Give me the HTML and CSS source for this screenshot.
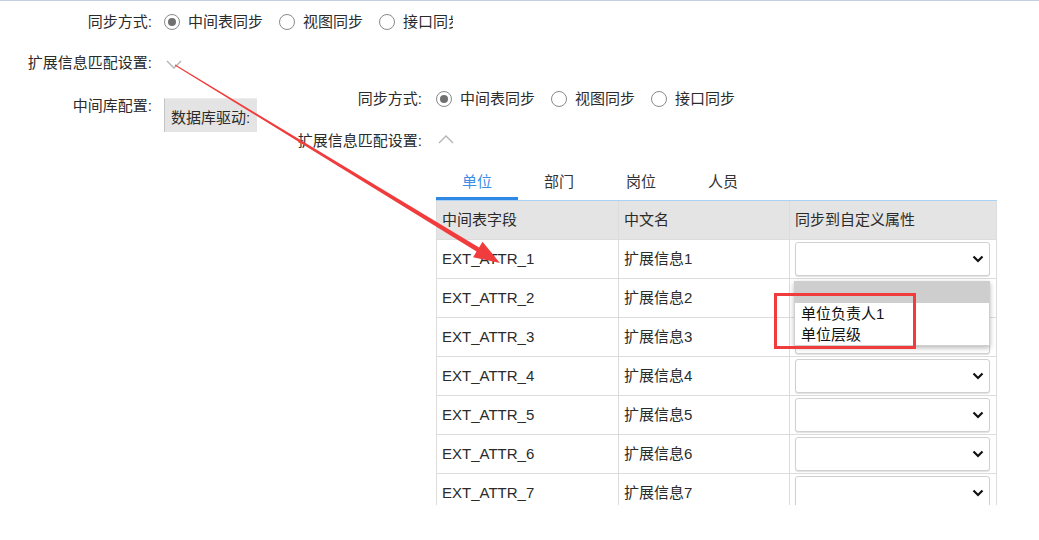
FILE: index.html
```html
<!DOCTYPE html>
<html lang="zh-CN">
<head>
<meta charset="utf-8">
<title>同步设置</title>
<link rel="stylesheet" href="styles.css">
</head>
<body>
<div class="topline"></div>
<div class="form">
  <div class="row r1">
    <div class="label">同步方式:</div>
    <div class="radios clip">
      <label class="radio"><span class="circle on"></span>中间表同步</label>
      <label class="radio"><span class="circle"></span>视图同步</label>
      <label class="radio"><span class="circle"></span>接口同步</label>
    </div>
  </div>
  <div class="row r2">
    <div class="label">扩展信息匹配设置:</div>
    <svg class="chev down" width="16" height="9" viewBox="0 0 16 9"><polyline points="1,1 8,8 15,1" fill="none" stroke="#b4b4b4" stroke-width="1.4"/></svg>
  </div>
  <div class="row r3">
    <div class="label">中间库配置:</div>
    <div class="db">数据库驱动:</div>
    <div class="panel">
      <div class="prow p1">
        <div class="plabel">同步方式:</div>
        <div class="radios">
          <label class="radio"><span class="circle on"></span>中间表同步</label>
          <label class="radio"><span class="circle"></span>视图同步</label>
          <label class="radio"><span class="circle"></span>接口同步</label>
        </div>
      </div>
      <div class="prow p2">
        <div class="plabel">扩展信息匹配设置:</div>
        <svg class="chev up" width="16" height="9" viewBox="0 0 16 9"><polyline points="1,8 8,1 15,8" fill="none" stroke="#b4b4b4" stroke-width="1.4"/></svg>
      </div>
      <div class="tabs">
        <div class="tab active">单位</div>
        <div class="tab">部门</div>
        <div class="tab">岗位</div>
        <div class="tab">人员</div>
      </div>
      <div class="tablewrap">
        <div class="trow head">
          <div class="cell">中间表字段</div>
          <div class="cell">中文名</div>
          <div class="cell last">同步到自定义属性</div>
        </div>
        <div class="trow"><div class="cell">EXT_ATTR_1</div><div class="cell">扩展信息1</div><div class="cell last sel"><div class="select"><svg width="12" height="8" viewBox="0 0 12 8"><polyline points="1.5,1.5 6,6 10.5,1.5" fill="none" stroke="#111" stroke-width="2.2"/></svg></div></div></div>
        <div class="trow"><div class="cell">EXT_ATTR_2</div><div class="cell">扩展信息2</div><div class="cell last sel"><div class="select"><svg width="12" height="8" viewBox="0 0 12 8"><polyline points="1.5,1.5 6,6 10.5,1.5" fill="none" stroke="#111" stroke-width="2.2"/></svg></div></div></div>
        <div class="trow"><div class="cell">EXT_ATTR_3</div><div class="cell">扩展信息3</div><div class="cell last sel"><div class="select"><svg width="12" height="8" viewBox="0 0 12 8"><polyline points="1.5,1.5 6,6 10.5,1.5" fill="none" stroke="#111" stroke-width="2.2"/></svg></div></div></div>
        <div class="trow"><div class="cell">EXT_ATTR_4</div><div class="cell">扩展信息4</div><div class="cell last sel"><div class="select"><svg width="12" height="8" viewBox="0 0 12 8"><polyline points="1.5,1.5 6,6 10.5,1.5" fill="none" stroke="#111" stroke-width="2.2"/></svg></div></div></div>
        <div class="trow"><div class="cell">EXT_ATTR_5</div><div class="cell">扩展信息5</div><div class="cell last sel"><div class="select"><svg width="12" height="8" viewBox="0 0 12 8"><polyline points="1.5,1.5 6,6 10.5,1.5" fill="none" stroke="#111" stroke-width="2.2"/></svg></div></div></div>
        <div class="trow"><div class="cell">EXT_ATTR_6</div><div class="cell">扩展信息6</div><div class="cell last sel"><div class="select"><svg width="12" height="8" viewBox="0 0 12 8"><polyline points="1.5,1.5 6,6 10.5,1.5" fill="none" stroke="#111" stroke-width="2.2"/></svg></div></div></div>
        <div class="trow"><div class="cell">EXT_ATTR_7</div><div class="cell">扩展信息7</div><div class="cell last sel"><div class="select"><svg width="12" height="8" viewBox="0 0 12 8"><polyline points="1.5,1.5 6,6 10.5,1.5" fill="none" stroke="#111" stroke-width="2.2"/></svg></div></div></div>
        <div class="dropdown">
          <div class="dd-blank"></div>
          <div class="dd-item">单位负责人1</div>
          <div class="dd-item">单位层级</div>
        </div>
      </div>
    </div>
  </div>
</div>
<svg class="annot" width="1039" height="540" viewBox="0 0 1039 540">
  <polygon fill="#f03c3c" points="175.26,64.57 479.1,247.4 482.5,241.8 500,263 473.1,257.2 476.5,251.6 174.74,65.43"/>
  <rect x="775.5" y="294.5" width="139" height="53" fill="none" stroke="#f03c3c" stroke-width="3"/>
</svg>
</body>
</html>
```

FILE: styles.css
```css
* { box-sizing: border-box; }
html, body { margin: 0; padding: 0; background: #fff; }
body {
  font-family: "Liberation Sans", "Noto Sans CJK SC", sans-serif;
  font-size: 15px;
  line-height: 20px;
  color: #2b2b2b;
  width: 1039px;
  height: 540px;
  overflow: hidden;
  position: relative;
}
.topline { height: 1px; background: #c3cee0; }

.row { display: flex; }
.label { width: 152px; text-align: right; margin-right: 12px; flex: none; }
.r1 { height: 42px; align-items: center; }
.r2 { height: 37px; padding-top: 10px; }
.r2 .chev { margin-top: 7px; margin-left: 2px; }
.r3 .label { padding-top: 16px; }

.radios { display: flex; align-items: center; white-space: nowrap; }
.clip { width: 289px; overflow: hidden; }
.radio { display: inline-flex; align-items: center; gap: 8px; margin-right: 16px; flex: none; }
.circle {
  width: 16px; height: 16px; border-radius: 50%;
  border: 1px solid #8a8a8a; background: #fff;
  display: inline-flex; align-items: center; justify-content: center; flex: none;
}
.circle.on::after {
  content: ""; width: 8px; height: 8px; border-radius: 50%; background: #707070;
}

.db {
  width: 93px; height: 34px; margin-top: 18px; flex: none;
  background: #e4e4e4; border-left: 1px solid #c4c4c4; border-top: 1px solid #ececec;
  padding: 9px 0 0 6px; white-space: nowrap; overflow: hidden;
}

.panel { margin-left: 33px; width: 707px; flex: none; }
.prow { display: flex; }
.plabel { width: 132px; text-align: right; margin-right: 14px; flex: none; }
.p1 { height: 38px; align-items: center; }
.p2 { height: 44px; padding-top: 13px; }
.p2 .chev { margin-top: 4px; margin-left: 2px; }

.tabs {
  margin-left: 146px; width: 561px; display: flex;
  border-bottom: 1px solid #a9d2f5; height: 39px;
}
.tab { width: 82px; height: 38px; padding-top: 10px; text-align: center; color: #333; }
.tab.active { color: #3a8ee6; box-shadow: inset 0 -3px 0 #2f88e3; }

.tablewrap {
  position: relative; margin-left: 146px; width: 561px; height: 304px; overflow: hidden;
  border-left: 1px solid #dcdcdc; border-right: 1px solid #dcdcdc;
}
.trow {
  display: grid; grid-template-columns: 182px 171px 1fr;
  height: 39px; border-bottom: 1px solid #dcdcdc;
}
.trow.head { background: #e4e4e4; }
.cell { border-right: 1px solid #dcdcdc; padding-left: 5px; display: flex; align-items: center; white-space: nowrap; }
.cell.last { border-right: 0; }
.cell.sel { align-items: flex-start; }
.select {
  margin-top: 2px; width: 195px; height: 34px;
  border: 1px solid #d0d0d0; border-radius: 3px; background: #fff;
  box-shadow: 0 1px 1px rgba(0,0,0,0.12);
  display: flex; align-items: center; justify-content: flex-end; padding-right: 5px;
}

.dropdown {
  position: absolute; left: 357px; top: 80px; width: 196px; height: 65px;
  background: #fff; border: 1px solid #cfcfcf;
  box-shadow: 0 2px 5px rgba(0,0,0,0.28);
}
.dd-blank { height: 21px; background: #cecece; }
.dd-item { height: 21px; line-height: 21px; padding-left: 6px; color: #111; }

.annot { position: absolute; left: 0; top: 0; pointer-events: none; }
```
